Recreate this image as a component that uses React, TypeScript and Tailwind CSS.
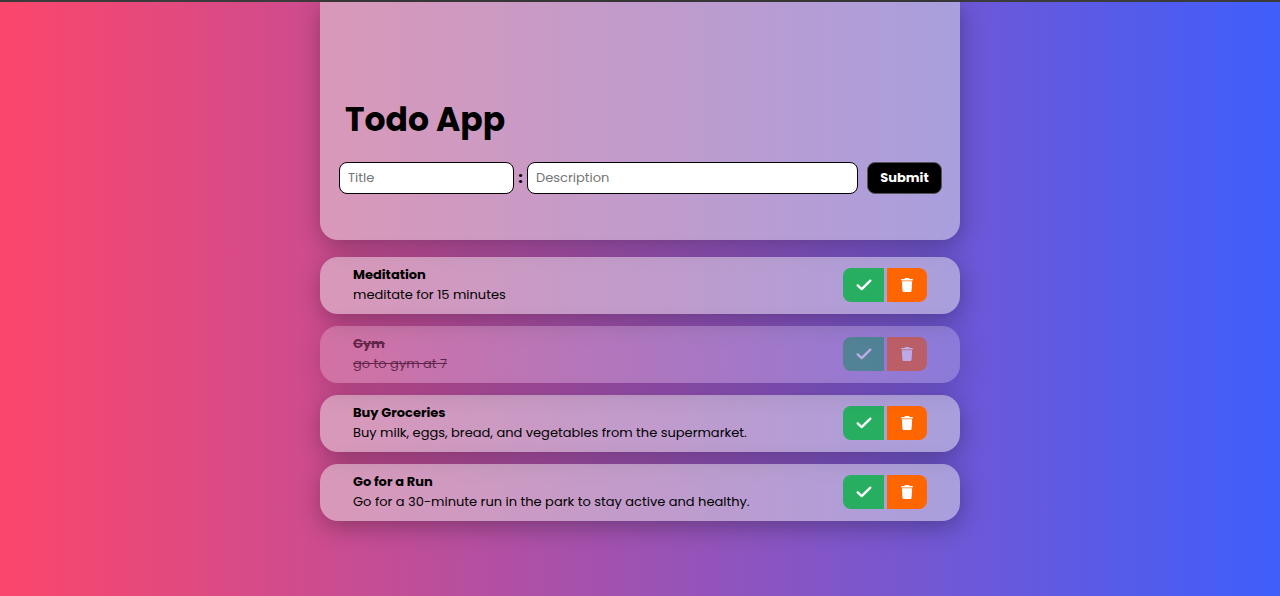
import { useState } from "react";
import type { FormEvent } from "react";

type Todo = { id: number; title: string; description: string; done: boolean };

const initialTodos: Todo[] = [
  { id: 1, title: "Meditation", description: "meditate for 15 minutes", done: false },
  { id: 2, title: "Gym", description: "go to gym at 7", done: true },
  {
    id: 3,
    title: "Buy Groceries",
    description: "Buy milk, eggs, bread, and vegetables from the supermarket.",
    done: false,
  },
  {
    id: 4,
    title: "Go for a Run",
    description: "Go for a 30-minute run in the park to stay active and healthy.",
    done: false,
  },
];

function CheckIcon() {
  return (
    <svg viewBox="0 0 16 14" className="h-3.5 w-4" fill="none" stroke="currentColor" strokeWidth="2.4" strokeLinecap="round" strokeLinejoin="round" aria-hidden="true">
      <path d="M1.7 7.4 5.7 11.1 14.3 2.7" />
    </svg>
  );
}

function TrashIcon() {
  return (
    <svg viewBox="0 0 448 512" className="h-3.5 w-3" preserveAspectRatio="none" fill="currentColor" aria-hidden="true">
      <path d="M135 18c5-11 17-18 29-18h120c12 0 24 7 29 18l7 14h96c18 0 32 10 32 28s-14 28-32 28H32C14 88 0 78 0 60s14-28 32-28h96zM32 122h384l-21 345c-2 25-23 45-48 45H101c-25 0-46-20-48-45z" />
    </svg>
  );
}

function TodoRow({ todo, onToggle, onRemove }: { todo: Todo; onToggle: () => void; onRemove: () => void }) {
  return (
    <li
      className={`flex min-h-[57px] items-center justify-between gap-4 rounded-[18px] bg-[#e6e8e4]/49 px-[33px] pb-px shadow-[1px_6px_24px_rgba(0,0,0,0.3)] ${
        todo.done ? "line-through opacity-50" : ""
      }`}
    >
      <div className="text-[13px] leading-5">
        <h2 className="font-bold">{todo.title}</h2>
        <p>{todo.description}</p>
      </div>
      <div className="flex shrink-0 gap-[3px] text-white">
        <button
          type="button"
          aria-label={`Complete ${todo.title}`}
          onClick={onToggle}
          className="flex h-[34px] w-[41px] items-center justify-center rounded-l-lg bg-[#27ae60]"
        >
          <CheckIcon />
        </button>
        <button
          type="button"
          aria-label={`Delete ${todo.title}`}
          onClick={onRemove}
          className="flex h-[34px] w-10 items-center justify-center rounded-r-lg bg-[#ff6600]"
        >
          <TrashIcon />
        </button>
      </div>
    </li>
  );
}

export default function App() {
  const [todos, setTodos] = useState(initialTodos);
  const [title, setTitle] = useState("");
  const [description, setDescription] = useState("");

  const addTodo = (event: FormEvent) => {
    event.preventDefault();
    if (!title.trim()) return;
    setTodos([...todos, { id: Date.now(), title, description, done: false }]);
    setTitle("");
    setDescription("");
  };

  return (
    <div className="min-h-screen border-t-2 border-[#3b3b3b] bg-linear-to-r/srgb from-[#fc466b] to-[#3f5efb] bg-origin-border font-['Poppins','Inter',sans-serif] text-black">
      <main className="mx-auto w-1/2">
        <header className="rounded-b-[18px] bg-[#e6e8e4]/49 pt-24 pr-[18px] pb-[46px] pl-[19px] shadow-[1px_6px_24px_rgba(0,0,0,0.3)]">
          <h1 className="px-1.5 text-[33px] leading-[44px] font-bold">Todo App</h1>
          <form onSubmit={addTodo} className="mt-5 flex h-8 items-center">
            <input
              aria-label="Title"
              placeholder="Title"
              value={title}
              onChange={(event) => setTitle(event.target.value)}
              className="h-8 w-[175px] rounded-lg border border-black bg-white px-2 text-[13px] placeholder:text-[#757575]"
            />
            <span className="w-[13px] text-center text-base font-bold">:</span>
            <input
              aria-label="Description"
              placeholder="Description"
              value={description}
              onChange={(event) => setDescription(event.target.value)}
              className="h-8 min-w-0 flex-1 rounded-lg border border-black bg-white px-2 text-[13px] placeholder:text-[#757575]"
            />
            <button type="submit" className="ml-[9px] h-8 w-[75px] rounded-lg border border-[#555] bg-black text-[13px] font-bold text-white">
              Submit
            </button>
          </form>
        </header>
        <ul className="mt-[17px] flex flex-col gap-3 pb-10">
          {todos.map((todo) => (
            <TodoRow
              key={todo.id}
              todo={todo}
              onToggle={() => setTodos(todos.map((t) => (t.id === todo.id ? { ...t, done: !t.done } : t)))}
              onRemove={() => setTodos(todos.filter((t) => t.id !== todo.id))}
            />
          ))}
        </ul>
      </main>
    </div>
  );
}
